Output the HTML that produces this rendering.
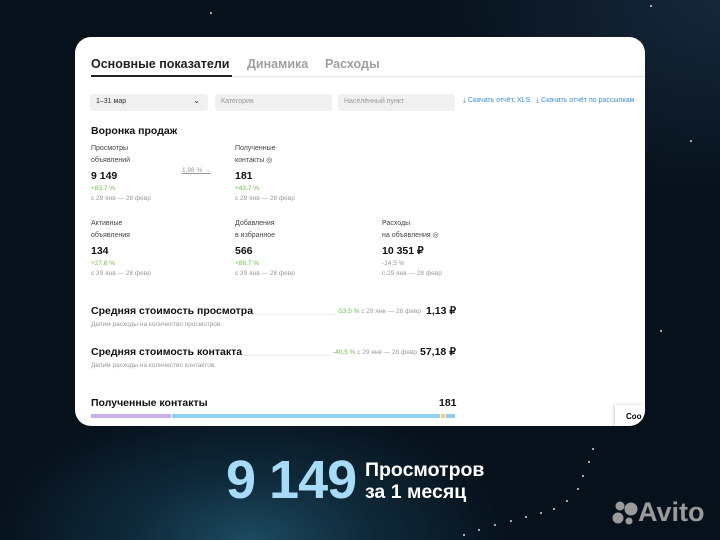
<!DOCTYPE html>
<html><head><meta charset="utf-8"><style>
*{margin:0;padding:0;box-sizing:border-box}
body{width:720px;height:540px;overflow:hidden;font-family:"Liberation Sans",sans-serif;
background:radial-gradient(ellipse 260px 140px at 250px 540px,#1d4a60 0%,#0f2a3a 45%,transparent 100%),radial-gradient(ellipse 300px 200px at 720px 0,#16283a,transparent),#07111b;position:relative}
.card{position:absolute;left:75px;top:37px;width:570px;height:389px;background:#fff;border-radius:16px;overflow:hidden}
.a{position:absolute;white-space:nowrap}
.t{font-size:12.5px;font-weight:bold;color:#222}
.box{position:absolute;top:57px;height:17px;background:#f0f0f0;border-radius:3px;font-size:7px;color:#999;padding:4px 6px}
.lab{font-size:7px;color:#444;line-height:12px}
.num{font-size:10.5px;font-weight:bold;color:#111}
.pc{font-size:6.5px;color:#6cc04a}
.dt{font-size:6.5px;color:#999}
.h{font-size:10.5px;font-weight:bold;color:#111}
.sub{font-size:6.5px;color:#999}
.dot{position:absolute;width:2px;height:2px;border-radius:1px;background:#cde}
</style></head><body>
<div class="dot" style="left:592px;top:448px"></div><div class="dot" style="left:588px;top:461px"></div><div class="dot" style="left:582px;top:475px"></div><div class="dot" style="left:577px;top:488px"></div><div class="dot" style="left:566px;top:500px"></div><div class="dot" style="left:553px;top:508px"></div><div class="dot" style="left:540px;top:512px"></div><div class="dot" style="left:525px;top:516px"></div><div class="dot" style="left:510px;top:520px"></div><div class="dot" style="left:494px;top:524px"></div><div class="dot" style="left:478px;top:529px"></div><div class="dot" style="left:463px;top:534px"></div>
<div class="dot" style="left:650px;top:5px"></div><div class="dot" style="left:210px;top:12px"></div><div class="dot" style="left:690px;top:140px"></div><div class="dot" style="left:660px;top:330px"></div>
<div class="card">
<div class="a t" style="left:16px;top:20px">Основные показатели</div>
<div class="a t" style="left:172px;top:20px;color:#a0a0a0">Динамика</div>
<div class="a t" style="left:250px;top:20px;color:#a0a0a0">Расходы</div>
<div class="a" style="left:16px;top:39px;width:554px;height:1px;background:#e8e8e8"></div>
<div class="a" style="left:16px;top:38px;width:141px;height:2px;background:#222"></div>
<div class="box" style="left:15px;width:118px;color:#333">1–31 мар<span style="position:absolute;right:8px;top:2px;font-size:8px">⌄</span></div>
<div class="box" style="left:140px;width:117px">Категория</div>
<div class="box" style="left:263px;width:117px">Населённый пункт</div>
<div class="a" style="left:388px;top:60px;font-size:7px;color:#3a8fd8">⤓ Скачать отчёт, XLS &nbsp;&nbsp;⤓ Скачать отчёт по рассылкам</div>
<div class="a" style="left:16px;top:88px;font-size:10.5px;font-weight:bold;color:#111">Воронка продаж</div>
<div class="a" style="left:16px;top:106px"><div class="lab">Просмотры<br>объявлений</div><div class="num" style="margin-top:3px">9 149</div><div class="pc" style="margin-top:3px">+83,7 %</div><div class="dt" style="margin-top:3px">с 29 янв — 28 февр</div></div>
<div class="a" style="left:107px;top:130px;font-size:6.5px;color:#999;text-decoration:underline">1,98 % →</div>
<div class="a" style="left:160px;top:106px"><div class="lab">Полученные<br>контакты ◎</div><div class="num" style="margin-top:3px">181</div><div class="pc" style="margin-top:3px">+43,7 %</div><div class="dt" style="margin-top:3px">с 29 янв — 28 февр</div></div>
<div class="a" style="left:16px;top:181px"><div class="lab">Активные<br>объявления</div><div class="num" style="margin-top:3px">134</div><div class="pc" style="margin-top:3px">+27,6 %</div><div class="dt" style="margin-top:3px">с 29 янв — 28 февр</div></div>
<div class="a" style="left:160px;top:181px"><div class="lab">Добавления<br>в избранное</div><div class="num" style="margin-top:3px">566</div><div class="pc" style="margin-top:3px">+88,7 %</div><div class="dt" style="margin-top:3px">с 29 янв — 28 февр</div></div>
<div class="a" style="left:307px;top:181px"><div class="lab">Расходы<br>на объявления ◎</div><div class="num" style="margin-top:3px">10 351 ₽</div><div class="dt" style="margin-top:3px">-14,5 %</div><div class="dt" style="margin-top:3px">с 29 янв — 28 февр</div></div>
<div class="a h" style="left:16px;top:268px">Средняя стоимость просмотра</div>
<div class="a" style="left:175px;top:277px;width:85px;height:1px;background:#eee"></div>
<div class="a" style="left:262px;top:271px;font-size:6.5px;color:#999"><span style="color:#6cc04a">-53,5 %</span> с 29 янв — 28 февр</div>
<div class="a h" style="left:351px;top:268px">1,13 ₽</div>
<div class="a sub" style="left:16px;top:284px">Делим расходы на количество просмотров.</div>
<div class="a h" style="left:16px;top:309px">Средняя стоимость контакта</div>
<div class="a" style="left:165px;top:318px;width:90px;height:1px;background:#eee"></div>
<div class="a" style="left:258px;top:312px;font-size:6.5px;color:#999"><span style="color:#6cc04a">-40,5 %</span> с 29 янв — 28 февр</div>
<div class="a h" style="left:345px;top:309px">57,18 ₽</div>
<div class="a sub" style="left:16px;top:325px">Делим расходы на количество контактов.</div>
<div class="a h" style="left:16px;top:360px">Полученные контакты</div>
<div class="a h" style="left:364px;top:360px">181</div>
<div class="a" style="left:16px;top:377px;width:80px;height:4px;background:#c9b0ea"></div>
<div class="a" style="left:97px;top:377px;width:268px;height:4px;background:#8fd0ee"></div>
<div class="a" style="left:366px;top:377px;width:4px;height:4px;background:#f0d070"></div>
<div class="a" style="left:371px;top:377px;width:9px;height:4px;background:#8fd0ee"></div>
<div class="a" style="left:540px;top:368px;width:30px;height:21px;background:#fff;box-shadow:-1px 0 3px rgba(0,0,0,.2);font-size:8px;font-weight:bold;padding:7px 0 0 11px">Coo</div>
</div>
<div class="a" style="left:226px;top:449px;font-size:54px;font-weight:bold;color:#a8dbf7;letter-spacing:-1px">9 149</div>
<div class="a" style="left:365px;top:459px;font-size:19.5px;font-weight:bold;color:#fff;line-height:22px">Просмотров<br>за 1 месяц</div>
<svg class="a" style="left:612px;top:500px" width="26" height="26"><circle cx="8" cy="6" r="4.5" fill="#9a9a9a"/><circle cx="19" cy="9" r="6.5" fill="#9a9a9a"/><circle cx="6" cy="18" r="5.5" fill="#9a9a9a"/><circle cx="17" cy="21" r="3.5" fill="#9a9a9a"/></svg>
<div class="a" style="left:638px;top:497px;font-size:27px;font-weight:bold;color:#9a9a9a">Avito</div>
</body></html>
